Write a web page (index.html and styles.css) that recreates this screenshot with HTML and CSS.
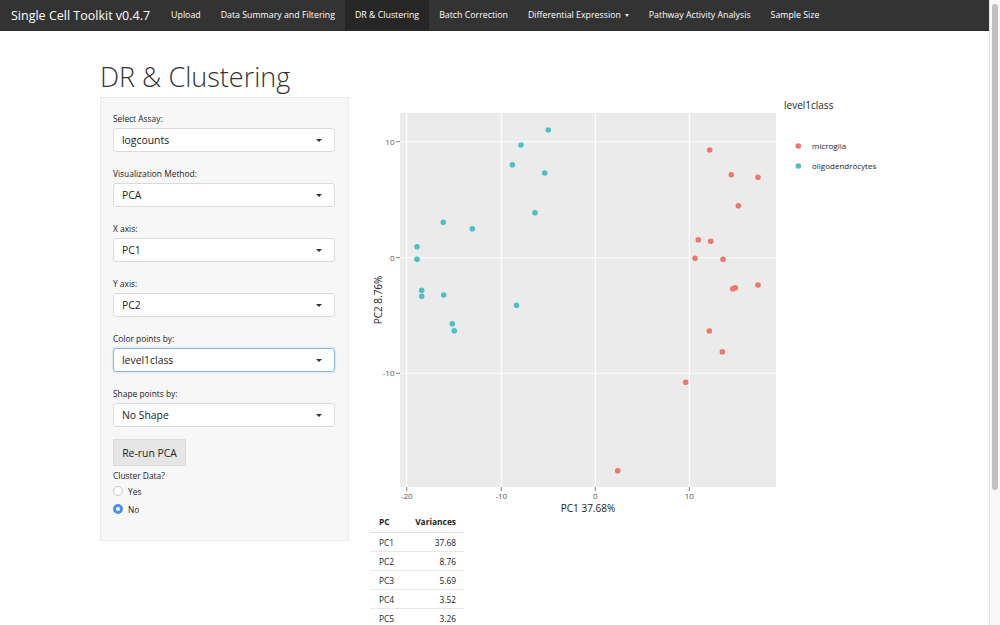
FILE: index.html
```html
<!DOCTYPE html>
<html lang="en">
<head>
<meta charset="utf-8">
<title>Single Cell Toolkit v0.4.7</title>
<link rel="stylesheet" href="styles.css">
</head>
<body>
<div class="page">
  <nav class="navbar">
    <span class="brand">Single Cell Toolkit v0.4.7</span>
    <ul class="nav">
      <li class="nav-item">Upload</li>
      <li class="nav-item">Data Summary and Filtering</li>
      <li class="nav-item active">DR &amp; Clustering</li>
      <li class="nav-item">Batch Correction</li>
      <li class="nav-item">Differential Expression <span class="caret"></span></li>
      <li class="nav-item">Pathway Activity Analysis</li>
      <li class="nav-item">Sample Size</li>
    </ul>
  </nav>

  <div class="content">
    <h2 class="title">DR &amp; Clustering</h2>
    <div class="row">
      <div class="well">
        <div class="form-group">
          <label class="control-label">Select Assay:</label>
          <div class="select"><span>logcounts</span><span class="sel-caret"></span></div>
        </div>
        <div class="form-group">
          <label class="control-label">Visualization Method:</label>
          <div class="select"><span>PCA</span><span class="sel-caret"></span></div>
        </div>
        <div class="form-group">
          <label class="control-label">X axis:</label>
          <div class="select"><span>PC1</span><span class="sel-caret"></span></div>
        </div>
        <div class="form-group">
          <label class="control-label">Y axis:</label>
          <div class="select"><span>PC2</span><span class="sel-caret"></span></div>
        </div>
        <div class="form-group">
          <label class="control-label">Color points by:</label>
          <div class="select focus"><span>level1class</span><span class="sel-caret"></span></div>
        </div>
        <div class="form-group last">
          <label class="control-label">Shape points by:</label>
          <div class="select"><span>No Shape</span><span class="sel-caret"></span></div>
        </div>
        <button class="btn">Re-run PCA</button>
        <div class="radio-group">
          <div class="control-label">Cluster Data?</div>
          <div class="radio"><span class="radio-circle"></span><span>Yes</span></div>
          <div class="radio"><span class="radio-circle checked"></span><span>No</span></div>
        </div>
      </div>

      <div class="main">
        <svg class="plot" width="540" height="419" viewBox="360 97 540 419" xmlns="http://www.w3.org/2000/svg">
          <rect x="400" y="113" width="376" height="374" fill="#ebebeb"/>
          <g stroke="#ffffff" stroke-width="1.1">
            <line x1="406.7" y1="113" x2="406.7" y2="487"/>
            <line x1="501.3" y1="113" x2="501.3" y2="487"/>
            <line x1="595.3" y1="113" x2="595.3" y2="487"/>
            <line x1="689.3" y1="113" x2="689.3" y2="487"/>
            <line x1="400" y1="141.7" x2="776" y2="141.7"/>
            <line x1="400" y1="257.7" x2="776" y2="257.7"/>
            <line x1="400" y1="373.3" x2="776" y2="373.3"/>
          </g>
          <g stroke="#6e6e6e" stroke-width="0.9">
            <line x1="396" y1="141.7" x2="400" y2="141.7"/>
            <line x1="396" y1="257.7" x2="400" y2="257.7"/>
            <line x1="396" y1="373.3" x2="400" y2="373.3"/>
            <line x1="406.7" y1="487" x2="406.7" y2="491"/>
            <line x1="501.3" y1="487" x2="501.3" y2="491"/>
            <line x1="595.3" y1="487" x2="595.3" y2="491"/>
            <line x1="689.3" y1="487" x2="689.3" y2="491"/>
          </g>
          <g class="tick" text-anchor="end">
            <text x="394.5" y="144.5">10</text>
            <text x="394.5" y="260.5">0</text>
            <text x="394.5" y="376.1">-10</text>
          </g>
          <g class="tick" text-anchor="middle">
            <text x="406.7" y="499.3">-20</text>
            <text x="501.3" y="499.3">-10</text>
            <text x="595.3" y="499.3">0</text>
            <text x="689.3" y="499.3">10</text>
          </g>
          <text class="axis-title" x="588" y="512.2" text-anchor="middle">PC1 37.68%</text>
          <text class="axis-title" transform="translate(381.6,300) rotate(-90)" text-anchor="middle">PC2 8.76%</text>

          <g fill="#4ebfc5">
            <circle cx="548.3" cy="130" r="2.8"/>
            <circle cx="521" cy="145" r="2.8"/>
            <circle cx="512.3" cy="164.7" r="2.8"/>
            <circle cx="544.7" cy="173" r="2.8"/>
            <circle cx="535" cy="212.7" r="2.8"/>
            <circle cx="443.3" cy="222.3" r="2.8"/>
            <circle cx="472.3" cy="228.7" r="2.8"/>
            <circle cx="417" cy="246.7" r="2.8"/>
            <circle cx="417" cy="259.3" r="2.8"/>
            <circle cx="421.7" cy="290.3" r="2.8"/>
            <circle cx="421.7" cy="296.3" r="2.8"/>
            <circle cx="443.7" cy="295" r="2.8"/>
            <circle cx="516.5" cy="305.3" r="2.8"/>
            <circle cx="452.3" cy="323.7" r="2.8"/>
            <circle cx="454.3" cy="330.7" r="2.8"/>
          </g>
          <g fill="#ec786d">
            <circle cx="709.7" cy="150" r="2.8"/>
            <circle cx="731.3" cy="174.7" r="2.8"/>
            <circle cx="758" cy="177.3" r="2.8"/>
            <circle cx="738.3" cy="205.7" r="2.8"/>
            <circle cx="698.3" cy="239.7" r="2.8"/>
            <circle cx="710.7" cy="241.3" r="2.8"/>
            <circle cx="695" cy="258.3" r="2.8"/>
            <circle cx="723" cy="259.3" r="2.8"/>
            <circle cx="732.7" cy="288.7" r="2.8"/>
            <circle cx="735.3" cy="287.7" r="2.8"/>
            <circle cx="758" cy="285" r="2.8"/>
            <circle cx="709.3" cy="331" r="2.8"/>
            <circle cx="722.3" cy="351.7" r="2.8"/>
            <circle cx="685.7" cy="382.3" r="2.8"/>
            <circle cx="617.7" cy="470.7" r="2.8"/>
          </g>

          <text class="legend-title" x="784" y="108.6">level1class</text>
          <circle cx="798.3" cy="146" r="2.8" fill="#ec786d"/>
          <circle cx="798.3" cy="166" r="2.8" fill="#4ebfc5"/>
          <text class="legend-item" x="812" y="148.9">microglia</text>
          <text class="legend-item" x="812" y="168.9">oligodendrocytes</text>
        </svg>

        <table class="var-table">
          <thead>
            <tr><th class="c1">PC</th><th class="c2">Variances</th></tr>
          </thead>
          <tbody>
            <tr><td class="c1">PC1</td><td class="c2">37.68</td></tr>
            <tr><td class="c1">PC2</td><td class="c2">8.76</td></tr>
            <tr><td class="c1">PC3</td><td class="c2">5.69</td></tr>
            <tr><td class="c1">PC4</td><td class="c2">3.52</td></tr>
            <tr><td class="c1">PC5</td><td class="c2">3.26</td></tr>
          </tbody>
        </table>
      </div>
    </div>
  </div>
</div>
<div class="scrollbar"><div class="thumb"></div></div>
</body>
</html>
```

FILE: styles.css
```css
html, body {
  margin: 0;
  padding: 0;
  height: 625px;
  overflow: hidden;
}
body {
  display: flex;
  font-family: "Open Sans", "Liberation Sans", sans-serif;
  color: #333;
  background: #fff;
}
.page {
  flex: 1;
  min-width: 0;
  height: 625px;
  overflow: hidden;
}

/* navbar */
.navbar {
  display: flex;
  align-items: stretch;
  height: 31px;
  background: #333333;
  border-bottom: 1px solid #2a2a2a;
  box-sizing: border-box;
}
.brand {
  display: flex;
  align-items: center;
  padding: 0 11px;
  font-size: 12.5px;
  color: #ffffff;
  white-space: nowrap;
}
.nav {
  display: flex;
  margin: 0;
  padding: 0;
  list-style: none;
}
.nav-item {
  display: flex;
  align-items: center;
  padding: 0 10px;
  font-size: 8.8px;
  color: #ffffff;
  white-space: nowrap;
}
.nav-item.active {
  background: #262626;
}
.caret {
  display: inline-block;
  width: 0;
  height: 0;
  margin-left: 4px;
  border-left: 2.5px solid transparent;
  border-right: 2.5px solid transparent;
  border-top: 3px solid #f2f2f2;
}

/* content */
.content {
  padding-left: 100px;
}
.title {
  margin: 0;
  padding-top: 32px;
  height: 34px;
  font-size: 27px;
  font-weight: 300;
  line-height: 28px;
  color: #333;
  white-space: nowrap;
}
.row {
  display: flex;
  align-items: flex-start;
}

/* sidebar well */
.well {
  width: 249px;
  height: 444px;
  box-sizing: border-box;
  padding: 15px 13px 0 12px;
  background: #f7f7f7;
  border: 1px solid #ebebeb;
}
.form-group {
  margin-bottom: 16px;
}
.form-group.last {
  margin-bottom: 12px;
}
.control-label {
  display: block;
  font-size: 8.4px;
  line-height: 12px;
  height: 12px;
  margin-bottom: 3px;
  color: #222;
}
.select {
  display: flex;
  align-items: center;
  justify-content: space-between;
  height: 24px;
  box-sizing: border-box;
  padding: 0 12px 0 8px;
  background: #fff;
  border: 1px solid #dadada;
  border-radius: 3px;
  font-size: 10.4px;
  color: #222;
}
.select.focus {
  border-color: #8fb9e4;
  box-shadow: 0 0 2px rgba(102, 175, 233, 0.6);
}
.sel-caret {
  width: 0;
  height: 0;
  border-left: 3px solid transparent;
  border-right: 3px solid transparent;
  border-top: 3.5px solid #333;
}
.btn {
  display: block;
  width: 73px;
  height: 27px;
  padding: 0;
  margin: 0;
  background: #e6e6e6;
  border: 1px solid #dcdcdc;
  border-radius: 0;
  font-family: "Open Sans", "Liberation Sans", sans-serif;
  font-size: 10.4px;
  color: #222;
}
.radio-group {
  margin-top: 4px;
}
.radio-group .control-label {
  margin-bottom: 0;
}
.radio {
  display: flex;
  align-items: center;
  height: 18px;
  font-size: 8.4px;
  color: #222;
}
.radio-circle {
  width: 10px;
  height: 10px;
  box-sizing: border-box;
  margin-right: 5px;
  border: 1px solid #c8c8c8;
  border-radius: 50%;
  background: #fff;
}
.radio-circle.checked {
  border: 3.5px solid #4a90e2;
  background: #fff;
}

/* main */
.main {
  margin-left: 11px;
}
.plot {
  display: block;
}
.tick {
  font-family: "Open Sans", "Liberation Sans", sans-serif;
  font-size: 8px;
  fill: #555;
}
.axis-title {
  font-family: "Open Sans", "Liberation Sans", sans-serif;
  font-size: 10px;
  fill: #222;
}
.legend-title {
  font-family: "Open Sans", "Liberation Sans", sans-serif;
  font-size: 10px;
  fill: #222;
}
.legend-item {
  font-family: "Open Sans", "Liberation Sans", sans-serif;
  font-size: 8px;
  fill: #222;
}

.var-table {
  margin-left: 10px;
  border-collapse: collapse;
  width: 94px;
  font-size: 8.4px;
  color: #222;
}
.var-table th {
  height: 16px;
  padding: 0;
  line-height: 12px;
  vertical-align: top;
  font-weight: 700;
  border-bottom: 1px solid #e2e2e2;
}
.var-table td {
  height: 18px;
  padding: 0;
  border-top: 1px solid #e8e8e8;
}
.var-table .c1 {
  text-align: left;
  padding-left: 9px;
}
.var-table .c2 {
  text-align: right;
  padding-right: 8px;
}

/* scrollbar strip */
.scrollbar {
  width: 10px;
  height: 625px;
  background: #f8f8f8;
  border-left: 1px solid #e6e6e6;
  position: relative;
}
.thumb {
  position: absolute;
  left: 2px;
  top: 4px;
  width: 6px;
  height: 486px;
  border-radius: 3px;
  background: #c1c1c1;
}
```
